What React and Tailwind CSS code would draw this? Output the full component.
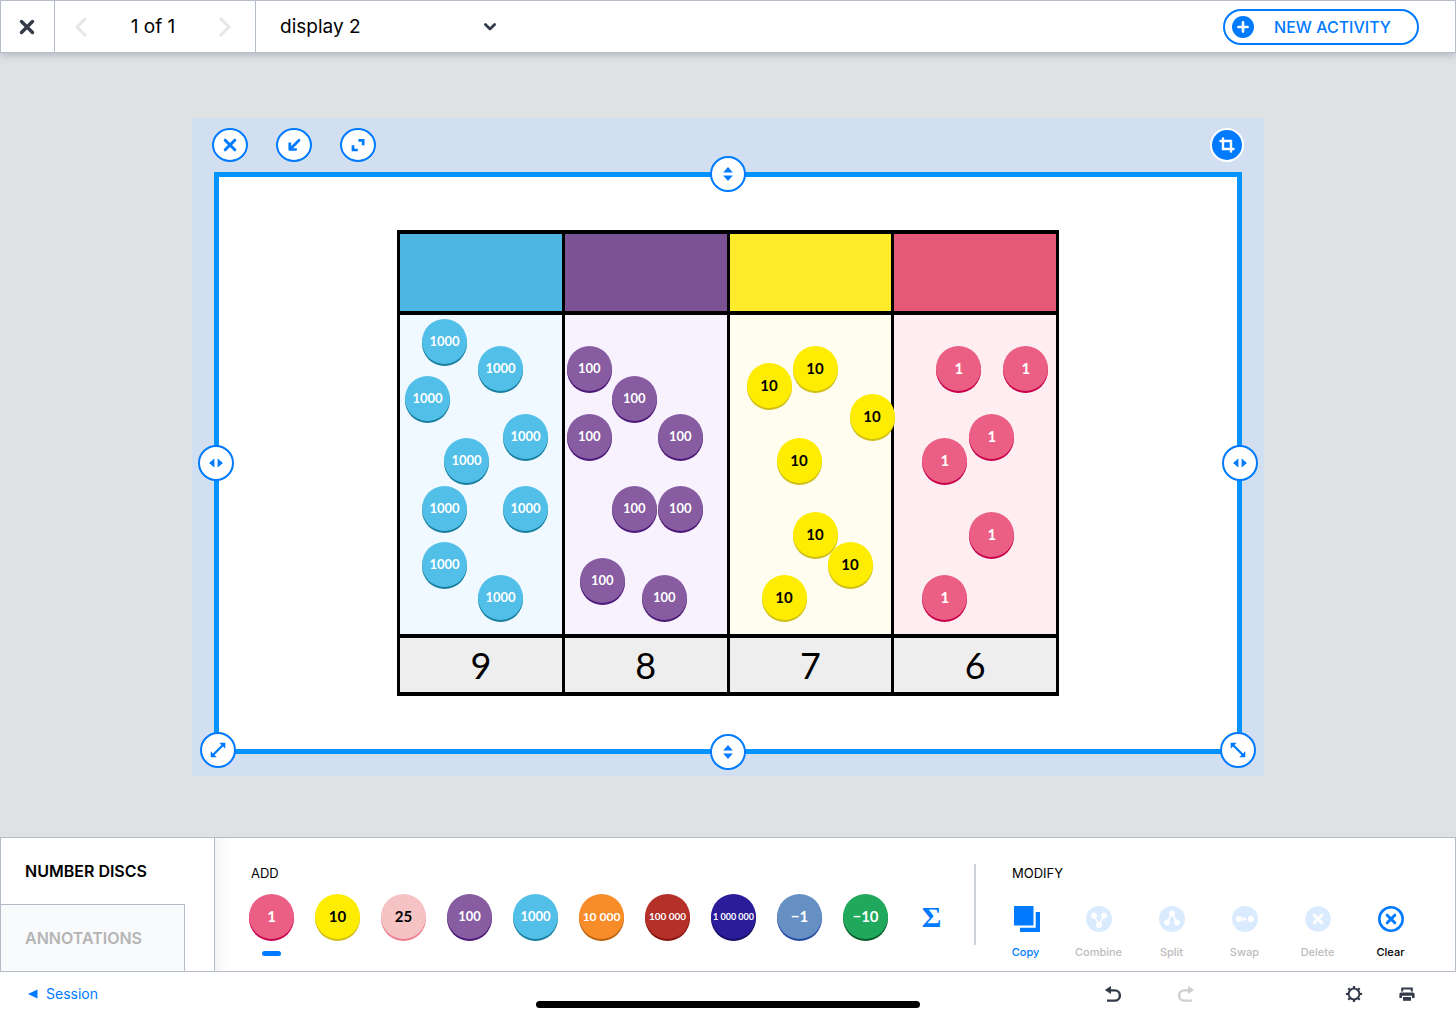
import { useState } from "react";

const DISC_STYLES = {
  "1": "bg-[#ea5f83] text-white shadow-[0_2px_0_#c8004c]",
  "10": "bg-[#feed00] text-black shadow-[0_2px_0_#cfbd18]",
  "25": "bg-[#f6c3c4] text-black shadow-[0_2px_0_#ee7c8c]",
  "100": "bg-[#875ca1] text-white shadow-[0_2px_0_#4c1878]",
  "1000": "bg-[#52bfe8] text-white shadow-[0_2px_0_#187f9f]",
  "10 000": "bg-[#f78c29] text-white shadow-[0_2px_0_#b96210]",
  "100 000": "bg-[#b53029] text-white shadow-[0_2px_0_#861410]",
  "1 000 000": "bg-[#2b1c9a] text-white shadow-[0_2px_0_#150b60]",
  "−1": "bg-[#6690c3] text-white shadow-[0_2px_0_#2449a4]",
  "−10": "bg-[#20a85c] text-white shadow-[0_2px_0_#0a5a2c]",
};

const discTextSize = (value) => {
  if (value.length > 8) return "text-[9px]";
  if (value.length > 6) return "text-[10px]";
  if (value.length > 5) return "text-[12px]";
  if (value.length > 2 && value !== "−10") return "text-[13px]";
  return "text-[15px]";
};

// x / y are the disc centres inside the column
const COLUMNS = [
  {
    value: "1000",
    count: 9,
    head: "bg-[#4db6e2]",
    body: "bg-[#eff9ff]",
    discs: [
      [44, 26], [100, 53], [27, 83], [125, 121], [66, 145],
      [44, 193], [125, 193], [44, 249], [100, 282],
    ],
  },
  {
    value: "100",
    count: 8,
    head: "bg-[#7b5395]",
    body: "bg-[#f7f2fe]",
    discs: [
      [24, 53], [69, 83], [24, 121], [115, 121],
      [69, 193], [115, 193], [37, 265], [99, 282],
    ],
  },
  {
    value: "10",
    count: 7,
    head: "bg-[#fdeb2c]",
    body: "bg-[#fffdf0]",
    discs: [
      [39, 70], [85, 53], [142, 101], [69, 145],
      [85, 219], [120, 249], [54, 282],
    ],
  },
  {
    value: "1",
    count: 6,
    head: "bg-[#e65878]",
    body: "bg-[#feeef2]",
    discs: [[64, 53], [131, 53], [97, 121], [50, 145], [97, 219], [50, 282]],
  },
];

const Disc = ({ value }) => (
  <span
    className={`flex size-[45px] items-center justify-center rounded-full font-[Lato,sans-serif] font-bold whitespace-nowrap ${DISC_STYLES[value]} ${discTextSize(value)}`}
  >
    {value}
  </span>
);

/* Icons */

const CrossIcon = ({ className, width = 3 }) => (
  <svg viewBox="0 0 16 16" className={className} fill="none" stroke="currentColor" strokeWidth={width} strokeLinecap="round">
    <path d="M2.5 2.5l11 11M13.5 2.5l-11 11" />
  </svg>
);

const ChevronIcon = ({ className, d }) => (
  <svg viewBox="0 0 20 20" className={className} fill="none" stroke="currentColor" strokeWidth="3" strokeLinecap="round" strokeLinejoin="round">
    <path d={d} />
  </svg>
);

const MinimizeIcon = () => (
  <svg viewBox="0 0 14 14" className="size-[14px]" fill="none" stroke="currentColor" strokeWidth="2.7">
    <path d="M12 2.2L3.5 10.7" strokeLinecap="round" />
    <path d="M2.8 4.5v7h7" strokeLinejoin="round" />
  </svg>
);

const ExpandIcon = () => (
  <svg viewBox="0 0 14 14" className="size-[14px]" fill="none" stroke="currentColor" strokeWidth="2.7">
    <path d="M7.4 2.400h4.800v4.800" />
    <path d="M2 7.200v4.800h4.800" />
  </svg>
);

const CropIcon = () => (
  <svg viewBox="0 0 16 16" className="size-4" fill="none" stroke="currentColor" strokeWidth="2.4" strokeLinecap="round">
    <path d="M4 1.500V12h10.500" />
    <path d="M1.500 4H12v10.500" />
  </svg>
);

const VerticalIcon = () => (
  <svg viewBox="0 0 14 16" className="h-4 w-[14px]" fill="currentColor">
    <path d="M7 1l4.8 5.4H2.2zM7 15L2.2 9.6h9.6z" />
  </svg>
);

const HorizontalIcon = () => (
  <svg viewBox="0 0 16 14" className="h-[14px] w-4" fill="currentColor">
    <path d="M1 7l5.4-4.6v9.2zM15 7L9.6 2.4v9.2z" />
  </svg>
);

const DiagonalIcon = ({ className = "" }) => (
  <svg viewBox="0 0 16 16" className={`size-4 ${className}`} fill="currentColor">
    <path d="M9.300 .7h6v6l-2.200-2.200-8.600 8.600 2.200 2.200h-6v-6l2.200 2.200 8.600-8.600z" />
  </svg>
);

const CopyIcon = () => (
  <svg viewBox="0 0 26 26" className="ml-[3px] size-[26px]" fill="currentColor">
    <path d="M0 0h19.5v19.5H0zM21.7 6H26v20H6v-4.200h15.700z" />
  </svg>
);

const CombineIcon = () => (
  <svg viewBox="0 0 26 26" className="size-[26px]">
    <circle cx="13" cy="13" r="13" fill="currentColor" />
    <g fill="#fff" stroke="#fff">
      <path d="M8 9.5l5 9.5 5-9.5" fill="none" strokeWidth="1.6" />
      <circle cx="8" cy="9.6" r="2.6" />
      <circle cx="18" cy="9.6" r="2.6" />
      <circle cx="13" cy="19" r="2.6" />
    </g>
  </svg>
);

const SplitIcon = () => (
  <svg viewBox="0 0 26 26" className="size-[26px]">
    <circle cx="13" cy="13" r="13" fill="currentColor" />
    <g fill="#fff" stroke="#fff">
      <path d="M8 16.5l5-9 5 9" fill="none" strokeWidth="1.6" />
      <circle cx="13" cy="7.4" r="2.6" />
      <circle cx="8" cy="16.6" r="2.6" />
      <circle cx="18" cy="16.6" r="2.6" />
    </g>
  </svg>
);

const SwapIcon = () => (
  <svg viewBox="0 0 26 26" className="size-[26px]">
    <circle cx="13" cy="13" r="13" fill="currentColor" />
    <g fill="#fff">
      <circle cx="7" cy="13" r="3.1" />
      <circle cx="19" cy="13" r="3.1" />
      <path d="M11 10.8l4 2.2-4 2.2z" />
      <path d="M8 12.5h4v1H8z" />
    </g>
  </svg>
);

const DeleteIcon = () => (
  <svg viewBox="0 0 26 26" className="size-[26px]">
    <circle cx="13" cy="13" r="12.8" fill="currentColor" />
    <path d="M9.200 9.200l7.600 7.600M16.800 9.200l-7.600 7.600" stroke="#fff" strokeWidth="3" strokeLinecap="round" />
  </svg>
);

const ClearIcon = () => (
  <svg viewBox="0 0 26 26" className="size-[26px]" fill="none" stroke="currentColor">
    <circle cx="13" cy="13" r="11.700" strokeWidth="2.600" />
    <path d="M9.200 9.200l7.600 7.600M16.800 9.200l-7.600 7.600" strokeWidth="3" strokeLinecap="round" />
  </svg>
);

const UndoIcon = ({ className = "" }) => (
  <svg viewBox="0 0 18 18" className={`size-[18px] ${className}`}>
    <path d="M5 5.400h5.800a5.100 5.100 0 0 1 0 10.200H3" fill="none" stroke="currentColor" strokeWidth="2.400" />
    <path d="M.8 5L7 .9v8.200z" fill="currentColor" />
  </svg>
);

const GearIcon = () => (
  <svg viewBox="0 0 18 18" className="size-[18px]" fill="none" stroke="currentColor">
    <circle cx="9" cy="9" r="5.4" strokeWidth="2" />
    <path
      d="M9 .9v2.4M9 14.7v2.4M.9 9h2.4M14.7 9h2.4M3.3 3.3l1.6 1.6M13.1 13.1l1.6 1.6M3.3 14.7l1.6-1.6M13.1 4.9l1.6-1.6"
      strokeWidth="2.2"
    />
  </svg>
);

const PrinterIcon = () => (
  <svg viewBox="0 0 18 18" className="size-[18px]" fill="currentColor">
    <path d="M3.2 2.4h11.6v4h-2V4.6H5.2v1.8h-2z" />
    <path d="M3 7.4h12a1.6 1.6 0 0 1 1.6 1.6v4H14v-2.2H4V13H1.4V9A1.6 1.6 0 0 1 3 7.4z" />
    <path d="M5 12h8v3.8H5z" />
  </svg>
);

const TOOLS = [
  { label: "Copy", icon: CopyIcon, tone: "text-[#007aff]" },
  { label: "Combine", icon: CombineIcon, disabled: true },
  { label: "Split", icon: SplitIcon, disabled: true },
  { label: "Swap", icon: SwapIcon, disabled: true },
  { label: "Delete", icon: DeleteIcon, disabled: true },
  { label: "Clear", icon: ClearIcon, tone: "text-black" },
];

const Header = () => (
  <header className="relative z-10 flex h-[53px] border border-[#b4bcc8] bg-white shadow-[0_2px_8px_rgba(90,105,130,0.35)]">
    <button aria-label="Close" className="flex w-[54px] items-center justify-center border-r border-[#b4bcc8] pr-0.5 text-[#333b4a]">
      <CrossIcon className="size-4" width={3.4} />
    </button>
    <div className="flex w-[201px] items-center justify-between border-r border-[#b4bcc8] pr-5 pl-4 text-[19px]">
      <button aria-label="Previous" disabled className="text-[#e6e6e6]">
        <ChevronIcon className="size-5" d="M14 2L6 10l8 8" />
      </button>
      <span className="pt-0.5">1 of 1</span>
      <button aria-label="Next" disabled className="text-[#e6e6e6]">
        <ChevronIcon className="size-5" d="M6 2l8 8-8 8" />
      </button>
    </div>
    <div className="grid w-[248px] items-center">
      <select aria-label="Display" className="col-start-1 row-start-1 h-full w-full appearance-none bg-transparent pt-0.5 pl-6 text-[19px]">
        <option>display 2</option>
      </select>
      <svg
        viewBox="0 0 14 10"
        className="pointer-events-none col-start-1 row-start-1 mr-[7px] h-[10px] w-[14px] justify-self-end text-[#333b4a]"
        fill="none"
        stroke="currentColor"
        strokeWidth="2.8"
        strokeLinecap="round"
        strokeLinejoin="round"
      >
        <path d="M2.4 2.5L7 7l4.6-4.5" />
      </svg>
    </div>
    <div className="ml-auto flex items-center pr-9">
      <button className="flex h-9 items-center gap-5 rounded-full border-2 border-[#007aff] pr-[26px] pl-[7px] text-[16px] font-medium text-[#007aff]">
        <svg viewBox="0 0 22 22" className="size-[22px]">
          <circle cx="11" cy="11" r="11" fill="currentColor" />
          <path d="M11 6.4v9.2M6.4 11h9.2" stroke="#fff" strokeWidth="2.6" strokeLinecap="round" />
        </svg>
        NEW ACTIVITY
      </button>
    </div>
  </header>
);

const WindowButton = ({ label, children }) => (
  <button
    aria-label={label}
    className="flex h-[34px] w-9 items-center justify-center rounded-[50%] border-2 border-[#007aff] bg-white text-[#007aff]"
  >
    {children}
  </button>
);

const Handle = ({ label, className, children }) => (
  <button
    aria-label={label}
    className={`absolute flex size-9 items-center justify-center rounded-full border-2 border-[#007aff] bg-white text-[#007aff] ${className}`}
  >
    {children}
  </button>
);

const PlaceValueTable = () => (
  <table className="w-full max-w-[662px] table-fixed border-separate border-spacing-x-[3px] border-spacing-y-1 bg-black">
    <thead>
      <tr>
        {COLUMNS.map((col) => (
          <th key={col.value} className={`h-[77px] p-0 ${col.head}`} />
        ))}
      </tr>
    </thead>
    <tbody>
      <tr>
        {COLUMNS.map((col) => (
          <td key={col.value} className={`p-0 ${col.body}`}>
            <div className="relative h-[319px]">
              {col.discs.map(([x, y]) => (
                <div key={`${x}-${y}`} className="absolute" style={{ left: x - 22, top: y - 22 }}>
                  <Disc value={col.value} />
                </div>
              ))}
            </div>
          </td>
        ))}
      </tr>
      <tr>
        {COLUMNS.map((col) => (
          <td key={col.value} className="h-[54px] bg-[#eeeeee] p-0 text-center font-[Lato,sans-serif] text-[36px] leading-[54px]">
            {col.count}
          </td>
        ))}
      </tr>
    </tbody>
  </table>
);

const ActivityWindow = () => (
  <section className="w-full max-w-[1072px] bg-[#d2dff0] pb-[22px]">
    <div className="flex items-center gap-7 px-5 py-[10px]">
      <WindowButton label="Close window">
        <CrossIcon className="size-[14px]" width={3.4} />
      </WindowButton>
      <WindowButton label="Minimise">
        <MinimizeIcon />
      </WindowButton>
      <WindowButton label="Full screen">
        <ExpandIcon />
      </WindowButton>
      <button
        aria-label="Crop"
        className="ml-auto flex size-[34px] items-center justify-center rounded-full border-2 border-white bg-[#007aff] text-white"
      >
        <CropIcon />
      </button>
    </div>
    <div className="relative mx-[22px] flex justify-center border-[5px] border-[#0593ff] bg-white px-4 py-[53px]">
      <PlaceValueTable />
      <Handle label="Resize top" className="-top-[21px] left-1/2 -translate-x-1/2">
        <VerticalIcon />
      </Handle>
      <Handle label="Resize bottom" className="-bottom-[21px] left-1/2 -translate-x-1/2">
        <VerticalIcon />
      </Handle>
      <Handle label="Resize left" className="top-1/2 -left-[21px] -translate-y-1/2">
        <HorizontalIcon />
      </Handle>
      <Handle label="Resize right" className="top-1/2 -right-[21px] -translate-y-1/2">
        <HorizontalIcon />
      </Handle>
      <Handle label="Resize bottom left" className="-bottom-[19px] -left-[19px]">
        <DiagonalIcon />
      </Handle>
      <Handle label="Resize bottom right" className="-right-[19px] -bottom-[19px]">
        <DiagonalIcon className="-scale-x-100" />
      </Handle>
    </div>
  </section>
);

const ToolPanel = () => {
  const [selected, setSelected] = useState("1");

  return (
    <div className="flex h-[135px] border border-[#b4bcc8] bg-white">
      <div className="flex w-[213px] flex-col">
        <button className="w-[184px] flex-1 pl-6 text-left text-[16px] font-semibold">
          NUMBER DISCS
        </button>
        <button className="h-[67px] w-[184px] border-t border-r border-[#b4bcc8] bg-[#f9fafc] pl-6 text-left text-[16px] font-semibold text-[#b5b5b5]">
          ANNOTATIONS
        </button>
      </div>

      <div className="flex flex-1 items-start border-l border-[#b4bcc8] bg-linear-to-r from-[#f3f4f6] to-white to-[14px] pl-[34px]">
        {/* Add */}
        <div className="pt-[25px]">
          <h2 className="pl-[2px] text-[13px] leading-5">ADD</h2>
          <div className="mt-[11px] flex gap-[21px]">
            {Object.keys(DISC_STYLES).map((value) => (
              <button key={value} onClick={() => setSelected(value)} className="flex flex-col items-center">
                <Disc value={value} />
                {selected === value && <span className="mt-3 h-[5px] w-[19px] rounded-full bg-[#007aff]" />}
              </button>
            ))}
            <button
              aria-label="Sum"
              className="flex size-[45px] items-center justify-center font-['Liberation_Serif',serif] text-[30px] leading-none font-bold text-[#007aff]"
            >
              Σ
            </button>
          </div>
        </div>

        {/* Modify */}
        <div className="mt-[26px] ml-[20px] h-[81px] border-l-2 border-[#ccd1d9]" />
        <div className="ml-[13px] pt-[25px]">
          <h2 className="pl-[23px] text-[13px] leading-5">MODIFY</h2>
          <div className="mt-[23px] flex">
            {TOOLS.map(({ label, icon: Icon, tone, disabled }) => (
              <button key={label} disabled={disabled} className="flex w-[73px] flex-col items-center">
                <span className={disabled ? "text-[#dbebff]" : "text-[#007aff]"}>
                  <Icon />
                </span>
                <span
                  className={`mt-3 text-[11px] leading-4 font-medium ${disabled ? "text-[#bcbcbc]" : tone}`}
                >
                  {label}
                </span>
              </button>
            ))}
          </div>
        </div>
      </div>
    </div>
  );
};

const Footer = () => (
  <footer className="relative flex h-[45px] items-center bg-white pr-10 pb-0.5 pl-7 text-[#333b4a]">
    <a href="#session" className="flex items-center gap-2 text-[14px] text-[#007aff]">
      <svg viewBox="0 0 10 10" className="size-[10px]" fill="currentColor">
        <path d="M0 5l9.5-4.500v9z" />
      </svg>
      Session
    </a>
    <div className="ml-auto flex gap-[55px]">
      <button aria-label="Undo">
        <UndoIcon />
      </button>
      <button aria-label="Redo" disabled className="text-[#cfcfcf]">
        <UndoIcon className="-scale-x-100" />
      </button>
    </div>
    <div className="ml-[150px] flex gap-[35px]">
      <button aria-label="Settings">
        <GearIcon />
      </button>
      <button aria-label="Print">
        <PrinterIcon />
      </button>
    </div>
    <div className="absolute bottom-[9px] left-1/2 h-[7px] w-96 -translate-x-1/2 rounded-full bg-black" />
  </footer>
);

const App = () => (
  <div className="flex min-h-screen flex-col bg-[#e0e1e4] font-[Inter,sans-serif] text-black">
    <Header />
    <main className="flex flex-1 items-start justify-center px-6 pt-[65px] pb-14">
      <ActivityWindow />
    </main>
    <ToolPanel />
    <Footer />
  </div>
);

export default App;
